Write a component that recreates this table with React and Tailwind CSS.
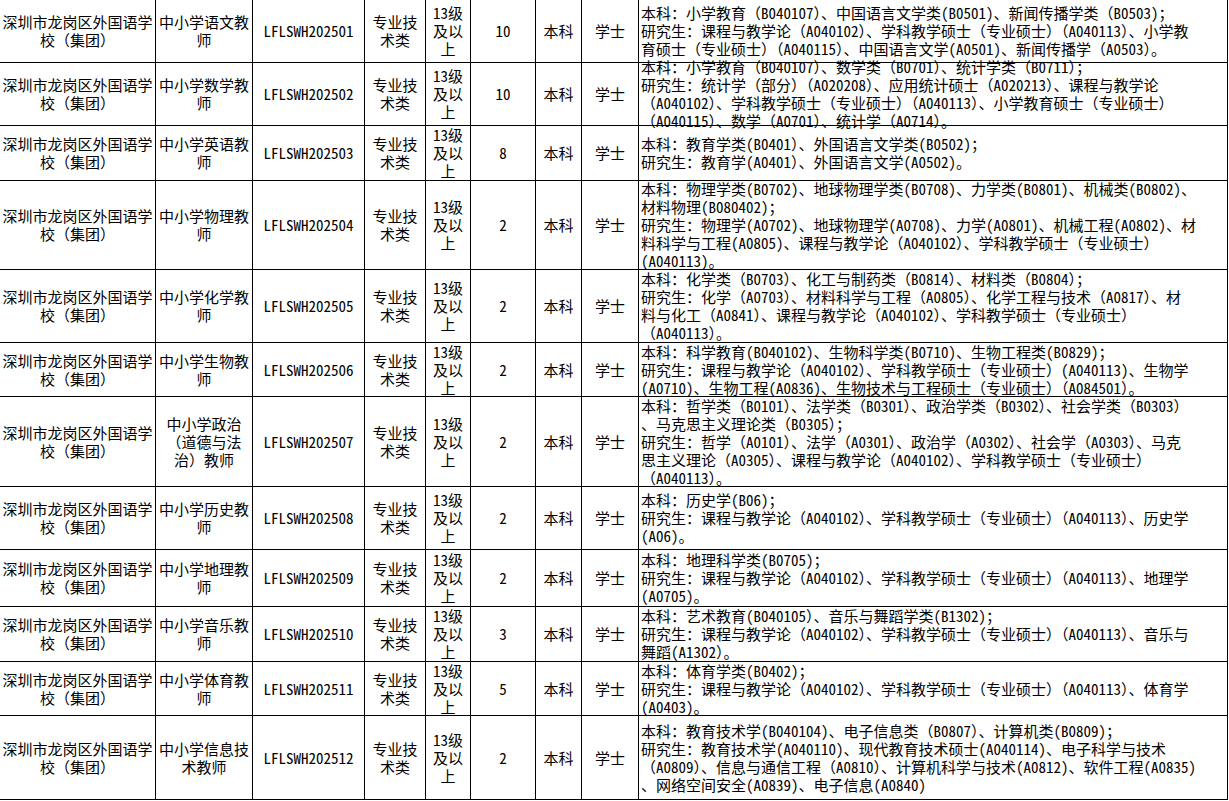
const rows = [
  {
    pos: ["中小学语文教", "师"],
    code: "LFLSWH202501",
    n: "10",
    req: [
      "本科：小学教育（B040107）、中国语言文学类(B0501)、新闻传播学类（B0503)；",
      "研究生：课程与教学论（A040102）、学科教学硕士（专业硕士）（A040113）、小学教",
      "育硕士（专业硕士）（A040115）、中国语言文学(A0501)、新闻传播学（A0503）。",
    ],
  },
  {
    pos: ["中小学数学教", "师"],
    code: "LFLSWH202502",
    n: "10",
    req: [
      "本科：小学教育（B040107）、数学类（B0701）、统计学类（B0711）；",
      "研究生：统计学（部分）（A020208）、应用统计硕士（A020213）、课程与教学论",
      "（A040102）、学科教学硕士（专业硕士）（A040113）、小学教育硕士（专业硕士）",
      "（A040115）、数学（A0701）、统计学（A0714）。",
    ],
  },
  {
    pos: ["中小学英语教", "师"],
    code: "LFLSWH202503",
    n: "8",
    req: [
      "本科：教育学类(B0401）、外国语言文学类(B0502)；",
      "研究生：教育学(A0401）、外国语言文学(A0502)。",
    ],
  },
  {
    pos: ["中小学物理教", "师"],
    code: "LFLSWH202504",
    n: "2",
    req: [
      "本科：物理学类(B0702)、地球物理学类(B0708)、力学类(B0801)、机械类(B0802)、",
      "材料物理(B080402)；",
      "研究生：物理学(A0702)、地球物理学(A0708)、力学(A0801)、机械工程(A0802)、材",
      "料科学与工程(A0805)、课程与教学论（A040102）、学科教学硕士（专业硕士）",
      "(A040113)。",
    ],
  },
  {
    pos: ["中小学化学教", "师"],
    code: "LFLSWH202505",
    n: "2",
    req: [
      "本科：化学类（B0703）、化工与制药类（B0814）、材料类（B0804）；",
      "研究生：化学（A0703）、材料科学与工程（A0805）、化学工程与技术（A0817）、材",
      "料与化工（A0841）、课程与教学论（A040102）、学科教学硕士（专业硕士）",
      "（A040113）。",
    ],
  },
  {
    pos: ["中小学生物教", "师"],
    code: "LFLSWH202506",
    n: "2",
    req: [
      "本科：科学教育(B040102)、生物科学类(B0710)、生物工程类(B0829)；",
      "研究生：课程与教学论（A040102）、学科教学硕士（专业硕士）(A040113)、生物学",
      "(A0710)、生物工程(A0836)、生物技术与工程硕士（专业硕士）（A084501）。",
    ],
  },
  {
    pos: ["中小学政治", "（道德与法", "治）教师"],
    code: "LFLSWH202507",
    n: "2",
    req: [
      "本科：哲学类（B0101）、法学类（B0301）、政治学类（B0302）、社会学类（B0303）",
      "、马克思主义理论类（B0305）；",
      "研究生：哲学（A0101）、法学（A0301）、政治学（A0302）、社会学（A0303）、马克",
      "思主义理论（A0305）、课程与教学论（A040102）、学科教学硕士（专业硕士）",
      "（A040113）。",
    ],
  },
  {
    pos: ["中小学历史教", "师"],
    code: "LFLSWH202508",
    n: "2",
    req: [
      "本科：历史学(B06)；",
      "研究生：课程与教学论（A040102）、学科教学硕士（专业硕士）（A040113）、历史学",
      "(A06)。",
    ],
  },
  {
    pos: ["中小学地理教", "师"],
    code: "LFLSWH202509",
    n: "2",
    req: [
      "本科：地理科学类(B0705)；",
      "研究生：课程与教学论（A040102）、学科教学硕士（专业硕士）（A040113）、地理学",
      "(A0705)。",
    ],
  },
  {
    pos: ["中小学音乐教", "师"],
    code: "LFLSWH202510",
    n: "3",
    req: [
      "本科：艺术教育(B040105）、音乐与舞蹈学类(B1302)；",
      "研究生：课程与教学论（A040102）、学科教学硕士（专业硕士）（A040113）、音乐与",
      "舞蹈(A1302）。",
    ],
  },
  {
    pos: ["中小学体育教", "师"],
    code: "LFLSWH202511",
    n: "5",
    req: [
      "本科：体育学类(B0402)；",
      "研究生：课程与教学论（A040102）、学科教学硕士（专业硕士）（A040113）、体育学",
      "(A0403)。",
    ],
  },
  {
    pos: ["中小学信息技", "术教师"],
    code: "LFLSWH202512",
    n: "2",
    req: [
      "本科：教育技术学(B040104)、电子信息类（B0807）、计算机类(B0809)；",
      "研究生：教育技术学(A040110)、现代教育技术硕士(A040114)、电子科学与技术",
      "（A0809）、信息与通信工程（A0810）、计算机科学与技术(A0812)、软件工程(A0835)",
      "、网络空间安全(A0839)、电子信息(A0840)",
    ],
  },
];

const Cell = ({ lines, left }) => (
  <div
    className={
      left
        ? "flex flex-col justify-center items-start border-r border-b border-black pl-[2px] overflow-visible"
        : "flex flex-col justify-center items-center text-center border-r border-b border-black overflow-visible"
    }
  >
    {lines.map((l, i) => (
      <span key={i} className="block whitespace-nowrap">
        {l}
      </span>
    ))}
  </div>
);

const App = () => {
  return (
    <div className="w-[1229px] h-[801px] bg-white overflow-hidden text-black">
      <div className="grid grid-cols-[156px_97px_112px_61px_45px_65px_46px_57px_589px] grid-rows-[63px_63px_55px_89px_73px_54px_90px_63px_57px_55px_54px_84px] text-[15px] leading-[18px] font-['Noto_Sans_Mono_CJK_SC','Noto_Sans_CJK_SC',sans-serif]">
        {rows.map((r) => (
          <div key={r.code} className="contents">
            <Cell lines={["深圳市龙岗区外国语学", "校（集团）"]} />
            <Cell lines={r.pos} />
            <Cell lines={[r.code]} />
            <Cell lines={["专业技", "术类"]} />
            <Cell lines={["13级", "及以", "上"]} />
            <Cell lines={[r.n]} />
            <Cell lines={["本科"]} />
            <Cell lines={["学士"]} />
            <Cell lines={r.req} left />
          </div>
        ))}
      </div>
    </div>
  );
};

export default App;
